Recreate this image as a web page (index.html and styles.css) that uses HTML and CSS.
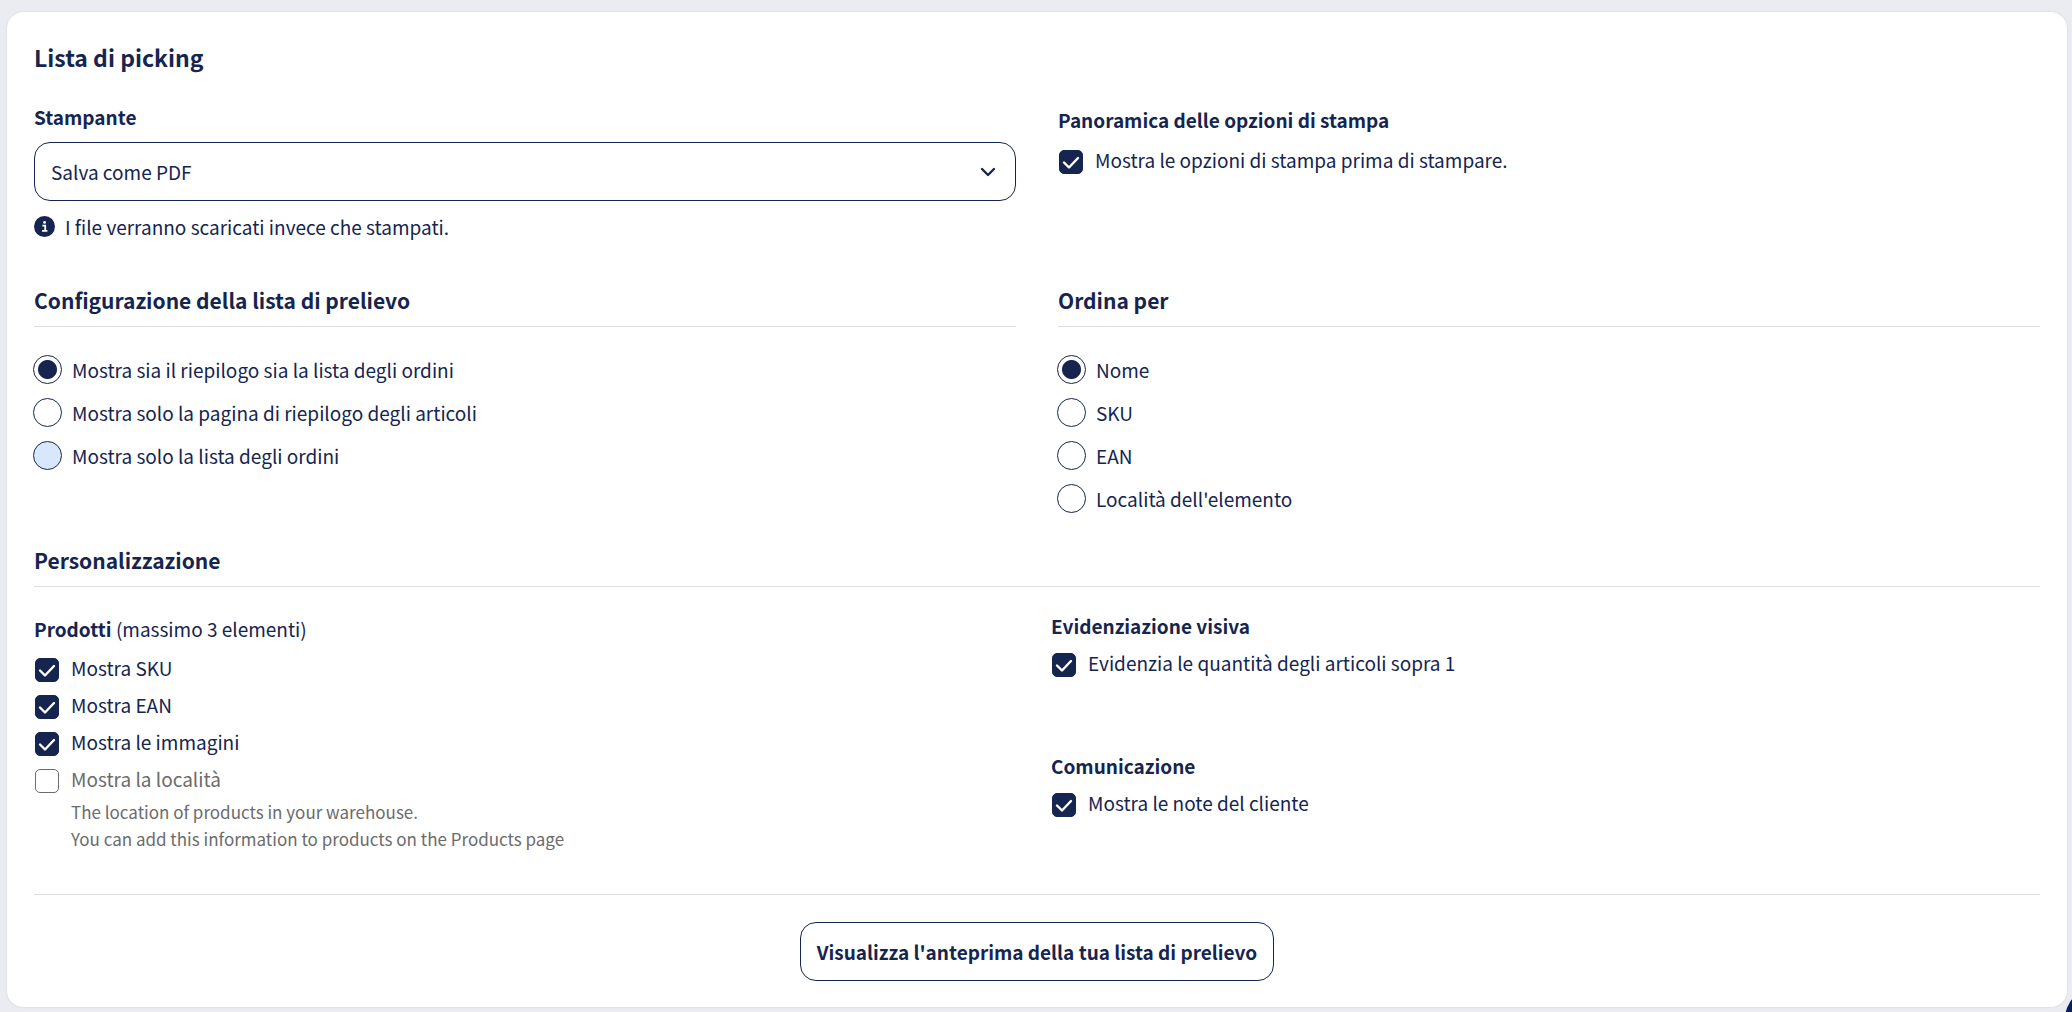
FILE: index.html
```html
<!DOCTYPE html>
<html lang="it">
<head>
    <meta charset="UTF-8">
    <meta name="viewport" content="width=device-width, initial-scale=1.0">
    <title>Lista di picking</title>
    <link rel="stylesheet" href="styles.css">
</head>
<body>
    <main class="card">
        <h1>Lista di picking</h1>

        <div class="columns">
            <div class="field">
                <label class="label" for="printer">Stampante</label>
                <select class="select" id="printer">
                    <option>Salva come PDF</option>
                </select>
                <p class="info">
                    <svg class="info-icon" viewBox="0 0 21 21" aria-hidden="true">
                        <circle cx="10.5" cy="10.5" r="10.5" fill="#152550"/>
                        <circle cx="10.6" cy="6.4" r="1.4" fill="#fff"/>
                        <path d="M8.4 9.6h2.8v5M8 14.8h5.4" fill="none" stroke="#fff" stroke-width="1.8"/>
                    </svg>
                    I file verranno scaricati invece che stampati.
                </p>
            </div>
            <div class="print-options">
                <h3 class="label">Panoramica delle opzioni di stampa</h3>
                <label class="check"><input type="checkbox" checked> Mostra le opzioni di stampa prima di stampare.</label>
            </div>
        </div>

        <div class="columns section">
            <section>
                <h2>Configurazione della lista di prelievo</h2>
                <div class="radios">
                    <label class="radio"><input type="radio" name="layout" checked> Mostra sia il riepilogo sia la lista degli ordini</label>
                    <label class="radio"><input type="radio" name="layout"> Mostra solo la pagina di riepilogo degli articoli</label>
                    <label class="radio"><input type="radio" name="layout" class="highlighted"> Mostra solo la lista degli ordini</label>
                </div>
            </section>
            <section>
                <h2>Ordina per</h2>
                <div class="radios">
                    <label class="radio"><input type="radio" name="sort" checked> Nome</label>
                    <label class="radio"><input type="radio" name="sort"> SKU</label>
                    <label class="radio"><input type="radio" name="sort"> EAN</label>
                    <label class="radio"><input type="radio" name="sort"> Località dell'elemento</label>
                </div>
            </section>
        </div>

        <section class="custom">
            <h2>Personalizzazione</h2>
            <div class="custom-grid">
                <div class="products">
                    <h3 class="label">Prodotti <span class="hint">(massimo 3 elementi)</span></h3>
                    <label class="check"><input type="checkbox" checked> Mostra SKU</label>
                    <label class="check"><input type="checkbox" checked> Mostra EAN</label>
                    <label class="check"><input type="checkbox" checked> Mostra le immagini</label>
                    <label class="check disabled"><input type="checkbox" disabled> Mostra la località</label>
                    <p class="note">The location of products in your warehouse.<br>You can add this information to products on the Products page</p>
                </div>
                <div class="extras">
                    <div>
                        <h3 class="label">Evidenziazione visiva</h3>
                        <label class="check"><input type="checkbox" checked> Evidenzia le quantità degli articoli sopra 1</label>
                    </div>
                    <div>
                        <h3 class="label">Comunicazione</h3>
                        <label class="check"><input type="checkbox" checked> Mostra le note del cliente</label>
                    </div>
                </div>
            </div>
        </section>

        <footer class="actions">
            <button type="button">Visualizza l'anteprima della tua lista di prelievo</button>
        </footer>
    </main>
    <button type="button" class="chat" aria-label="Chat"></button>
</body>
</html>
```
FILE: styles.css
```css
:root {
    --navy: #152550;
    --grey: #6b6b6b;
    --line: #dedede;
    --background: #ebecf2;
}

* {
    box-sizing: border-box;
    margin: 0;
    padding: 0;
}

body {
    font-family: "Noto Sans CJK SC", "Noto Sans", sans-serif;
    font-size: 19px;
    line-height: 27px;
    color: var(--navy);
    background: var(--background);
    padding: 12px 5px 5px 7px;
    overflow: hidden;
}

.card {
    background: white;
    padding: 26px 27px;
    border-radius: 16px;
    box-shadow: 0 0 2px rgba(0, 0, 0, 0.15);
}

h1 {
    font-size: 23px;
    line-height: 38px;
    font-weight: 600;
    margin-bottom: 27px;
}

h2 {
    font-size: 21px;
    line-height: 34px;
    font-weight: 600;
    padding-bottom: 9px;
    border-bottom: 1px solid var(--line);
    margin-bottom: 28px;
}

.label {
    display: block;
    font-size: 19px;
    font-weight: 600;
}

.hint {
    font-weight: 400;
}

.columns {
    display: grid;
    grid-template-columns: 1fr 1fr;
    gap: 42px;
}

.section {
    margin-top: 43px;
}

.select {
    display: block;
    width: 100%;
    height: 59px;
    margin: 12px 0;
    padding: 0 16px;
    appearance: none;
    font: inherit;
    color: inherit;
    border: 1px solid var(--navy);
    border-radius: 16px;
    background: white url("data:image/svg+xml,%3Csvg xmlns='http://www.w3.org/2000/svg' width='16' height='10' fill='none' stroke='%23152550' stroke-width='2.4' stroke-linecap='round' stroke-linejoin='round'%3E%3Cpath d='M2 2l6 6 6-6'/%3E%3C/svg%3E") no-repeat right 19px center;
}

.info {
    display: flex;
    align-items: center;
    gap: 10px;
}

.info-icon {
    width: 21px;
    height: 21px;
}

.print-options {
    padding-top: 3px;
}

.print-options .label {
    margin-bottom: 13px;
}

.check {
    display: flex;
    align-items: flex-start;
    gap: 12px;
    margin-top: 10px;
}

/* the box hangs slightly below the text line */
.check input {
    appearance: none;
    flex: none;
    width: 24px;
    height: 24px;
    margin: 4px 0 -1px 1px;
    border: 1px solid var(--navy);
    border-radius: 5px;
}

.check input:checked {
    background: var(--navy) url("data:image/svg+xml,%3Csvg xmlns='http://www.w3.org/2000/svg' width='24' height='24' fill='none' stroke='white' stroke-width='2.4' stroke-linecap='round' stroke-linejoin='round'%3E%3Cpath d='M5 12.5l5 5 9-9.5'/%3E%3C/svg%3E") no-repeat center;
}

.disabled {
    color: var(--grey);
}

.disabled input {
    border-color: var(--grey);
}

.radios {
    display: grid;
    gap: 14px;
}

.radio {
    display: flex;
    align-items: center;
    gap: 10px;
    height: 29px;
}

.radio input {
    appearance: none;
    flex: none;
    width: 29px;
    height: 29px;
    margin-left: -1px;
    border: 1px solid var(--navy);
    border-radius: 50%;
}

.radio input:checked {
    background: radial-gradient(circle, var(--navy) 9px, transparent 10px);
}

.radio .highlighted {
    background: #d7e8fd;
}

.custom {
    margin-top: 30px;
}

.custom-grid {
    display: grid;
    grid-template-columns: 1fr 1fr;
    gap: 28px;
}

.products .label {
    margin-bottom: 12px;
}

.note {
    margin: 6px 0 0 37px;
    font-size: 17px;
    color: var(--grey);
}

.extras {
    display: grid;
    align-content: start;
    gap: 76px;
    margin-top: -3px;
}

.actions {
    margin-top: 42px;
    padding-top: 27px;
    border-top: 1px solid var(--line);
    text-align: center;
}

.actions button {
    height: 59px;
    padding: 0 16px;
    font: inherit;
    font-weight: 600;
    color: inherit;
    background: white;
    border: 1px solid var(--navy);
    border-radius: 16px;
    vertical-align: top;
}

.chat {
    position: fixed;
    right: -72px;
    bottom: -51px;
    width: 80px;
    height: 80px;
    border: none;
    border-radius: 50%;
    background: #0a1f5c;
}
```
